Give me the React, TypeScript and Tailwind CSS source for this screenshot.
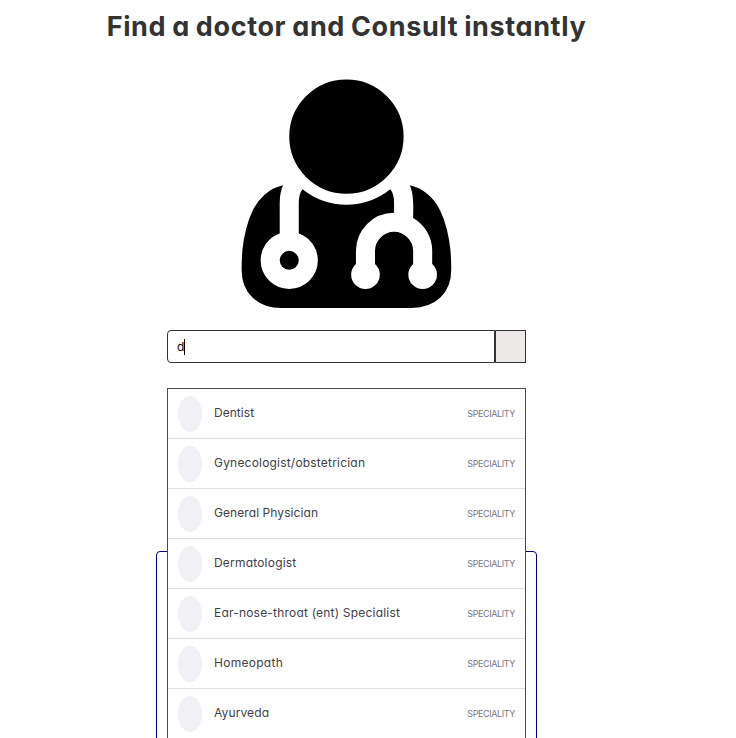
const specialities = [
  { name: 'Dentist', tracking: 'tracking-[0.04px]' },
  { name: 'Gynecologist/obstetrician', tracking: 'tracking-[0.2px]' },
  { name: 'General Physician', tracking: 'tracking-[0.08px]' },
  { name: 'Dermatologist', tracking: 'tracking-[0.2px]' },
  { name: 'Ear-nose-throat (ent) Specialist', tracking: 'tracking-[0.2px]' },
  { name: 'Homeopath', tracking: 'tracking-[0.28px]' },
  { name: 'Ayurveda', tracking: 'tracking-[0.12px]' },
];

function DoctorIcon() {
  return (
    <svg className="block h-[230px] w-[211px]" viewBox="0 0 211 230" fill="#000">
      <path
        transform="translate(0.6 0.4) scale(0.1489 0.1488) translate(0 -128)"
        d="M384 1344q0 26-19 45t-45 19-45-19-19-45 19-45 45-19 45 19 19 45zm1024 61q0 120-73 189.500t-194 69.500h-874q-121 0-194-69.500t-73-189.500q0-68 5.500-131t24-138 47.500-132.500 81-103 120-60.500q-22 52-22 120v203q-58 20-93 70t-35 111q0 80 56 136t136 56 136-56 56-136q0-61-35.500-111t-92.500-70v-203q0-62 25-93 132 104 295 104t295-104q25 31 25 93v64q-106 0-181 75t-75 181v89q-32 29-32 71 0 40 28 68t68 28 68-28 28-68q0-42-32-71v-89q0-52 38-90t90-38 90 38 38 90v89q-32 29-32 71 0 40 28 68t68 28 68-28 28-68q0-42-32-71v-89q0-68-34.500-127.500t-93.500-93.500q0-10 .5-42.500t0-48-2.500-41.500-7-47-13-40q68 15 120 60.500t81 103 47.500 132.500 24 138 5.500 131zm-320-893q0 159-112.500 271.500t-271.500 112.500-271.500-112.500-112.500-271.500 112.500-271.500 271.500-112.500 271.500 112.500 112.500 271.500z"
      />
    </svg>
  );
}

function SearchBar() {
  return (
    <div className="flex h-[33px] w-[359px]">
      <div className="flex flex-1 items-center rounded-l-[4px] border border-[#333] bg-white pl-[9px]">
        <span className="w-[7px] text-[12px] leading-none text-black">d</span>
        <span className="h-4 w-px bg-black" />
      </div>
      <div className="w-[31px] border border-[#333] bg-[#eee9e9]" />
    </div>
  );
}

function Suggestions() {
  return (
    <ul className="absolute top-[58px] left-0 w-[359px] border border-[#4a4a4c] bg-white">
      {specialities.map((s) => (
        <li key={s.name} className="flex h-[50px] items-center border-b border-[#dedede] px-[10px]">
          <span className="mt-px h-9 w-6 rounded-[50%] bg-[#f0f0f5]" />
          <span className={`-mt-px ml-3 flex-1 text-[12px] leading-none whitespace-nowrap text-[#414146] ${s.tracking}`}>{s.name}</span>
          <span className="mt-px text-[9px] leading-[10px] tracking-[-0.4px] text-[#787887]">SPECIALITY</span>
        </li>
      ))}
    </ul>
  );
}

export default function App() {
  return (
    <main className="h-[738px] w-full overflow-hidden bg-white font-['Inter','Liberation_Sans',sans-serif] [font-feature-settings:'cv11']">
      <div className="flex w-[693px] flex-col items-center">
        <h1 className="mt-[9px] h-9 text-[27px] leading-9 font-bold tracking-[0.62px] whitespace-nowrap text-[#333] [word-spacing:-1px]">Find a doctor and Consult instantly</h1>
        <div className="mt-[34px]">
          <DoctorIcon />
        </div>
        <div className="relative z-10 mt-[21px]">
          <SearchBar />
          <Suggestions />
        </div>
        <div className="mt-[188px] h-[260px] w-[381px] rounded-[4px] border border-[#000080]" />
      </div>
    </main>
  );
}
